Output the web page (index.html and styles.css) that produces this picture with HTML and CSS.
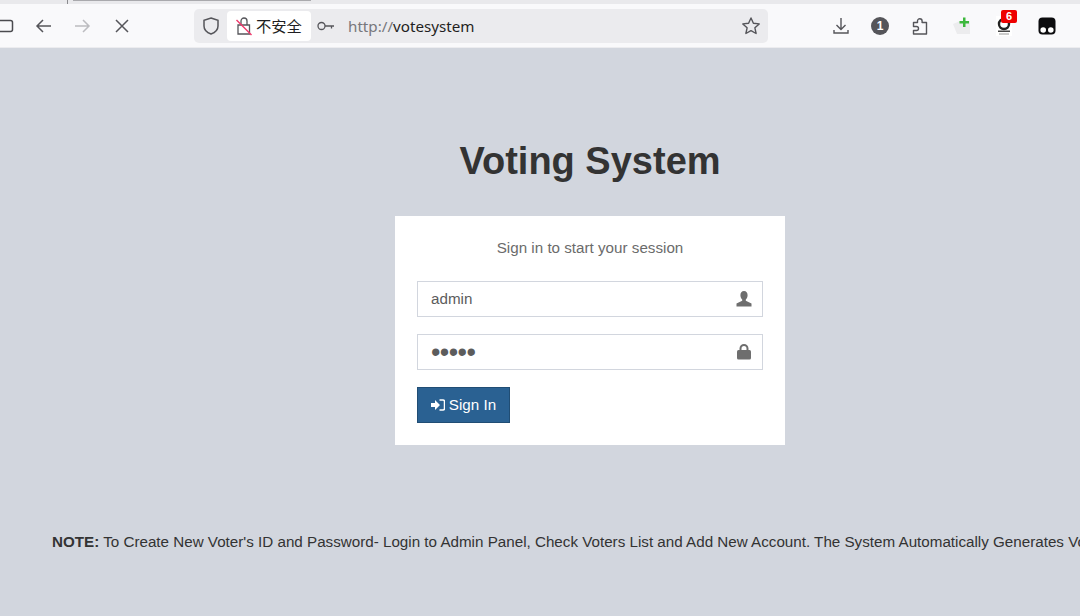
FILE: index.html
```html
<!DOCTYPE html>
<html lang="en">
<head>
<meta charset="utf-8">
<title>Voting System</title>
<link rel="stylesheet" href="styles.css">
</head>
<body>
<div class="tabstrip"><span class="tab-sep"></span><span class="tab-shadow"></span></div>
<header class="toolbar">
  <div class="nav">
    <svg class="ico sq" width="14" height="20" viewBox="0 0 14 20"><path d="M-2 4.500H10.500A2 2 0 0 1 12.500 6.500V13.500A2 2 0 0 1 10.500 15.500H-2" fill="none" stroke="#4b4b4f" stroke-width="1.500"/></svg>
    <svg class="ico" width="20" height="20" viewBox="0 0 20 20"><path d="M17 10H3M9 4l-6 6 6 6" fill="none" stroke="#55555a" stroke-width="1.500"/></svg>
    <svg class="ico" width="20" height="20" viewBox="0 0 20 20"><path d="M3 10h14M11 4l6 6-6 6" fill="none" stroke="#bcbcc0" stroke-width="1.500"/></svg>
    <svg class="ico" width="20" height="20" viewBox="0 0 20 20"><path d="M4 4l12 12M16 4L4 16" fill="none" stroke="#55555a" stroke-width="1.500"/></svg>
  </div>
  <div class="address">
    <svg class="shield" width="18" height="20" viewBox="0 0 18 20"><path d="M9 2l7 2.400V10c0 4-3 6.600-7 8-4-1.400-7-4-7-8V4.400z" fill="none" stroke="#55555a" stroke-width="1.500"/></svg>
    <div class="secure">
      <svg width="16" height="20" viewBox="0 0 16 20"><path d="M5 9V5a3 3 0 0 1 6 0V9M2 9h11.500v9H2z" fill="none" stroke="#55555a" stroke-width="1.300"/><path d="M.5 4l15 15" stroke="#f0386b" stroke-width="1.400"/></svg>
      <span>不安全</span>
    </div>
    <svg class="key" width="18" height="12" viewBox="0 0 18 12"><circle cx="4.500" cy="6" r="3.500" fill="none" stroke="#55555a" stroke-width="1.300"/><path d="M8 6h9M14.500 6v2.500" fill="none" stroke="#55555a" stroke-width="1.300"/></svg>
    <div class="url"><span class="scheme">http://</span>votesystem</div>
    <svg class="star" width="20" height="20" viewBox="0 0 20 20"><path d="M10 2l2.400 5.300 5.800.600-4.300 3.900 1.200 5.700L10 14.600l-5.100 2.900 1.200-5.700-4.300-3.900 5.800-.600z" fill="none" stroke="#55555a" stroke-width="1.400" stroke-linejoin="round"/></svg>
  </div>
  <div class="extensions">
    <svg class="ext" width="18" height="18" viewBox="0 0 18 18"><path d="M9 1v11M4.500 8L9 12.500 13.500 8M2 13v3h14v-3" fill="none" stroke="#55555a" stroke-width="1.400"/></svg>
    <span class="onecircle">1</span>
    <svg class="ext" width="16" height="18" viewBox="0 0 16 18"><path d="M1.500 17V13.500H4.500a2 2 0 0 0 0-4H1.500V5.500H5.500V4a2.300 2.300 0 0 1 4.600 0V5.500H14.500V17Z" fill="none" stroke="#55555a" stroke-width="1.400" stroke-linejoin="round"/></svg>
    <span class="ext-green"><svg width="18" height="20" viewBox="0 0 18 20"><path d="M0 8L7 5H17V18H4Z" fill="#ececee"/><path d="M10 1.500h2.500v3.500H16v2.500h-3.500V11H10V7.500H6.500V5H10z" fill="#3cb83c"/></svg></span>
    <span class="ext-badge"><svg width="16" height="20" viewBox="0 0 16 20"><rect width="16" height="20" fill="#fff"/><circle cx="8" cy="8" r="5" fill="none" stroke="#222" stroke-width="2.400"/><path d="M2 14.500h12v1.500H2z" fill="#444"/><path d="M3 17.500h10v1H3z" fill="#999"/></svg><span class="count">6</span></span>
    <svg class="ext tanuki" width="18" height="18" viewBox="0 0 18 18"><rect x=".5" y=".5" width="17" height="17" rx="4" fill="#0c0c0e"/><circle cx="5.200" cy="13" r="2.800" fill="#fff"/><circle cx="12.800" cy="13" r="2.800" fill="#fff"/></svg>
  </div>
</header>
<main class="page">
  <h1 class="title">Voting System</h1>
  <section class="box">
    <p class="msg">Sign in to start your session</p>
    <div class="field"><span class="value">admin</span>
      <svg width="16" height="16" viewBox="0 0 16 16"><path d="M8 0c2.300 0 3.600 1.800 3.600 4.200 0 1.900-.8 3.300-1.800 4.300v1.300L15.500 12.500V15.500H.5V12.500L6.200 9.800V8.500C5.200 7.500 4.400 6.100 4.400 4.200 4.400 1.800 5.700 0 8 0z" fill="#6e6e6e"/></svg>
    </div>
    <div class="field"><span class="dots">•••••</span>
      <svg width="16" height="16" viewBox="0 0 16 16"><path d="M4.500 7V4.500a3.500 3.500 0 0 1 7 0V7" fill="none" stroke="#6e6e6e" stroke-width="2"/><rect x="1" y="6" width="14" height="9.500" rx="1.500" fill="#6e6e6e"/></svg>
    </div>
    <button class="signin" type="button"><svg width="14" height="12" viewBox="0 0 14 12"><path d="M0 4h4V1l5 5-5 5V8H0z" fill="#fff"/><path d="M8.500 1H12a1.500 1.500 0 0 1 1.500 1.500v7A1.500 1.500 0 0 1 12 11H8.500" fill="none" stroke="#fff" stroke-width="1.500"/></svg><span class="signin-label">Sign In</span></button>
  </section>
  <p class="note"><b>NOTE:</b> To Create New Voter's ID and Password- Login to Admin Panel, Check Voters List and Add New Account. The System Automatically Generates Voter's ID and Password</p>
</main>
</body>
</html>
```

FILE: styles.css
```css
* { box-sizing: border-box; }
html, body { margin: 0; height: 100%; overflow: hidden; }
body { width: 1080px; height: 616px; background: #d2d6de; font-family: "Liberation Sans", Arial, sans-serif; display: flex; flex-direction: column; }
.tabstrip { height: 4px; background: #e9e9ec; display: flex; flex: none; }
.tab-sep { width: 1px; height: 4px; margin-left: 67px; background: #8a8a8e; }
.tab-shadow { width: 238px; height: 1px; margin-left: 5px; background: #a9a9ad; }
.toolbar { height: 44px; flex: none; background: #f9f9fb; display: flex; align-items: center; padding-top: 1px; border-bottom: 1px solid #ececef; }
.nav { display: flex; width: 194px; align-items: center; }
.ico { display: block; flex: none; }
.nav .ico:nth-child(2) { margin-left: 20px; }
.nav .ico:nth-child(3) { margin-left: 18px; }
.nav .ico:nth-child(4) { margin-left: 20px; }
.address { width: 574px; height: 34px; background: #ebebee; border-radius: 5px; display: flex; align-items: center; padding-left: 8px; padding-right: 7px; margin-right: 1px; }
.shield { flex: none; }
.secure { width: 84px; height: 30px; margin-left: 7px; background: #fff; border-radius: 4px; display: flex; align-items: center; padding-left: 9px; gap: 4px; }
.secure span { font: 15.300px/1 "Noto Sans CJK SC", sans-serif; color: #1f1f22; }
.key { margin-left: 6px; flex: none; }
.url { margin-left: 13px; flex: 1; padding-top: 2px; font: 15.200px/1 "Noto Sans", sans-serif; color: #1f1f22; }
.scheme { color: #77777c; }
.star { flex: none; }
.extensions { display: flex; align-items: center; flex: 1; padding-left: 63px; }
.ext { flex: none; display: block; }
.onecircle { width: 18px; height: 18px; margin-left: 21px; border-radius: 50%; background: #55555a; color: #fff; font: bold 12px/18px "Liberation Sans", sans-serif; text-align: center; }
.extensions .ext:nth-child(3) { margin-left: 23px; }
.ext-green { margin-left: 25px; height: 20px; }
.ext-badge { position: relative; margin-left: 25px; height: 20px; }
.count { position: absolute; left: 5px; top: -6px; width: 16px; height: 13px; background: #e00; border-radius: 2px; color: #fff; font: bold 11px/13px "Liberation Sans", sans-serif; text-align: center; }
.extensions .ext:last-child { margin-left: 26px; }
.page { flex: 1; display: flex; flex-direction: column; align-items: center; padding-left: 100px; }
.title { margin: 90px 0 0; font-size: 38px; line-height: 46px; font-weight: 700; color: #333; white-space: nowrap; }
.box { width: 390px; height: 229px; margin-top: 32px; background: #fff; padding: 22px; display: flex; flex-direction: column; }
.msg { margin: 0 0 23px; text-align: center; font-size: 15.200px; line-height: 20px; color: #6b6b6b; }
.field { height: 36px; border: 1px solid #d2d6de; display: flex; align-items: center; justify-content: space-between; padding: 0 10px 0 13px; margin-bottom: 17px; font-size: 15.200px; color: #5c5c5c; flex: none; }
.value { margin-bottom: 2px; }
.dots { font-size: 27px; line-height: 1; letter-spacing: -.6px; }
.signin { width: 93px; height: 36px; background: #2a6192; border: 1px solid #204d74; color: #fff; font: 15.200px "Liberation Sans", sans-serif; padding: 0; display: flex; align-items: center; justify-content: center; gap: 4px; }
.signin-label { margin-bottom: 1px; }
.note { align-self: flex-start; margin: 87px 0 0 -48px; font-size: 15.200px; line-height: 20px; color: #333; white-space: nowrap; }
```
